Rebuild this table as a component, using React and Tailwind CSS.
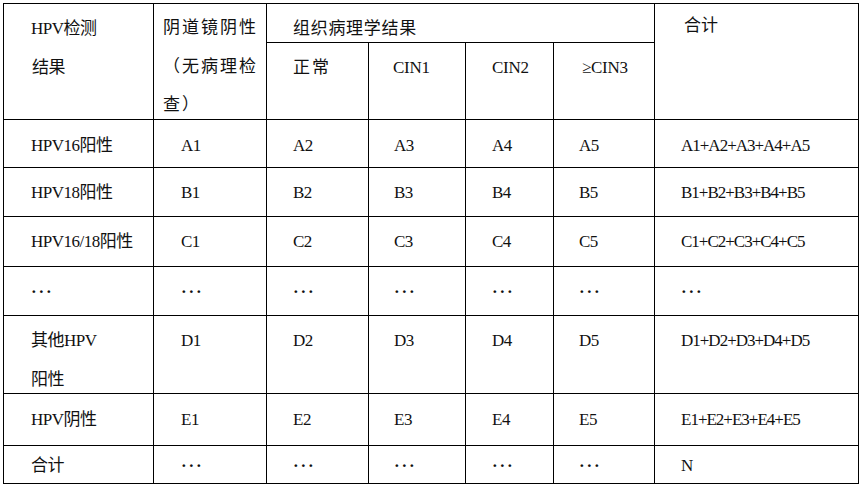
import React from "react";

const D = "···";

const rows = [
  { label: "HPV16阳性", vals: ["A1", "A2", "A3", "A4", "A5"], sum: "A1+A2+A3+A4+A5", pt: "pt-[6px]" },
  { label: "HPV18阳性", vals: ["B1", "B2", "B3", "B4", "B5"], sum: "B1+B2+B3+B4+B5", pt: "pt-[5px]" },
  { label: "HPV16/18阳性", vals: ["C1", "C2", "C3", "C4", "C5"], sum: "C1+C2+C3+C4+C5", pt: "pt-[5px]" },
  { label: D, vals: [D, D, D, D, D], sum: D, pt: "pt-[5px]" },
  { label: ["其他HPV", "阳性"], vals: ["D1", "D2", "D3", "D4", "D5"], sum: "D1+D2+D3+D4+D5", pt: "pt-[5px]" },
  { label: "HPV阴性", vals: ["E1", "E2", "E3", "E4", "E5"], sum: "E1+E2+E3+E4+E5", pt: "pt-[6px]" },
  { label: "合计", vals: [D, D, D, D, D], sum: "N", pt: "pt-[3px]", last: true },
];

const valPad = ["pl-[27px]", "pl-[26px]", "pl-[25px]", "pl-[26px]", "pl-[25px]"];

const cell = "border-r border-b border-black whitespace-nowrap";

const Text = ({ v }) =>
  v === D ? <span className="tracking-[1.8px] font-bold">{v}</span> : v;

const App = () => {
  return (
    <div className="min-h-screen bg-white pl-[3px] pt-[3px] text-[17px] text-[#111] font-['Liberation_Serif','Noto_Sans_CJK_SC',serif]">
      <div className="grid w-[856px] grid-cols-[150px_113px_102px_97px_88px_101px_204px] grid-rows-[39px_77px_48px_49px_50px_49px_78px_52px_38px] border-l border-t border-black">
        {/* header */}
        <div className={`${cell} row-span-2 pl-[27px] pt-[5px] leading-[39px] tracking-[-0.5px]`}>
          HPV检测
          <br />
          <span className="pl-[1px]">结果</span>
        </div>
        <div className={`${cell} row-span-2 pl-[9px] pt-[5px] leading-[38.5px] tracking-[2px]`}>
          阴道镜阴性
          <br />
          （无病理检
          <br />
          查）
        </div>
        <div className={`${cell} col-span-4 pl-[26px] pt-[5px] leading-[39px] tracking-[0.7px]`}>
          组织病理学结果
        </div>
        <div className={`${cell} row-span-2 pl-[29px] pt-[2px] leading-[39px]`}>合计</div>
        <div className={`${cell} pl-[26px] pt-[5px] leading-[39px] tracking-[2px]`}>正常</div>
        <div className={`${cell} pl-[24px] pt-[5px] leading-[39px] tracking-[-0.3px]`}>CIN1</div>
        <div className={`${cell} pl-[26px] pt-[5px] leading-[39px] tracking-[-0.3px]`}>CIN2</div>
        <div className={`${cell} pl-[28px] pt-[5px] leading-[39px] tracking-[-0.3px]`}>≥CIN3</div>

        {/* body */}
        {rows.map((r, i) => (
          <React.Fragment key={i}>
            <div
              className={`${cell} pl-[27px] ${r.pt} ${r.last ? "leading-[34px]" : "leading-[39px]"} tracking-[-0.5px]`}
            >
              {Array.isArray(r.label) ? (
                <>
                  {r.label[0]}
                  <br />
                  {r.label[1]}
                </>
              ) : (
                <Text v={r.label} />
              )}
            </div>
            {r.vals.map((v, j) => (
              <div
                key={j}
                className={`${cell} ${valPad[j]} ${r.pt} ${r.last ? "leading-[34px]" : "leading-[39px]"} tracking-[-0.5px]`}
              >
                <Text v={v} />
              </div>
            ))}
            <div
              className={`${cell} pl-[26px] ${r.pt} ${r.last ? "leading-[34px]" : "leading-[39px]"} tracking-[-1px]`}
            >
              <Text v={r.sum} />
            </div>
          </React.Fragment>
        ))}
      </div>
    </div>
  );
};

export default App;
